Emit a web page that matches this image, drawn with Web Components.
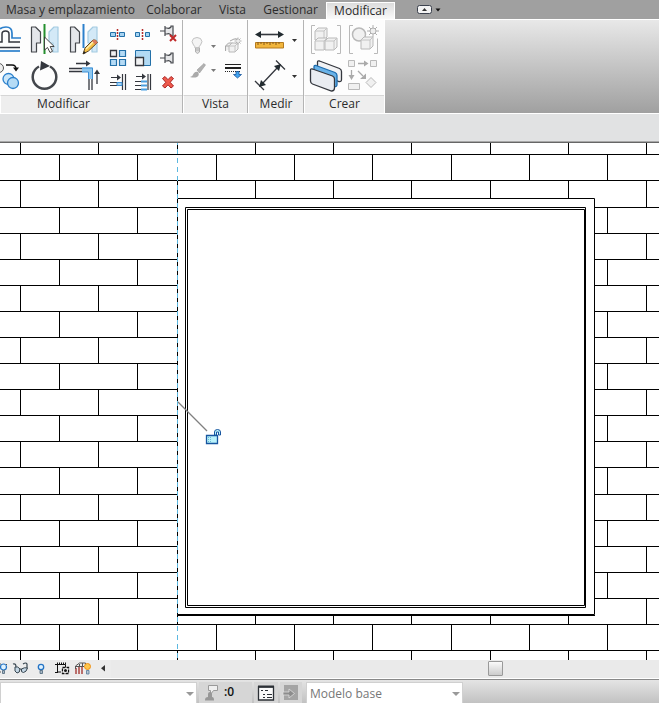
<!DOCTYPE html>
<html lang="es">
<head>
<meta charset="utf-8">
<title>Modificar</title>
<style>
html,body{height:100%;margin:0}
body{font:12px/16px "Open Sans","Noto Sans",sans-serif;color:#2b2b2b;overflow:hidden}
</style>
</head>
<body>
<cad-app></cad-app>
<script>
const DOOR = (x, flip, fill, stroke) => {
  const s = flip ? -1 : 1, p = (dx, y) => (x + s * dx) + ' ' + y;
  return `<path d="M${p(0,27)}L${p(4,27)} ${p(9,32)} ${p(9,43)} ${p(5,43)} ${p(5,52)} ${p(0,52)}Z" fill="${fill}" stroke="${stroke}" stroke-width="1.2" stroke-linejoin="round"/>`;
};
const PIN = y => `<path d="M160 ${y}h5M165 ${y-5}v10M165 ${y-3}h2q2 1 4 -1v-1h2v10h-2v-1q-2-2-4-1h-2" fill="#e6e7e9" stroke="#44474c" stroke-width="1.2"/>`;
const DROP = (x, y) => `<path d="M${x-2.5} ${y-1.5}h5l-2.5 3z" fill="#333"/>`;
const CUBE = (x, y, s) => `<path d="M${x} ${y+3}l3-3h${s}v${s}l-3 3h-${s}z" fill="#f1f1f1" stroke="#b9b9b9"/><path d="M${x} ${y+3}h${s}v${s}M${x+s} ${y+3}l3-3" fill="none" stroke="#c4c4c4"/>`;
const ICONS = {
  offset: ['0 20 24 37', `<path d="M0 42H2V34q0-3 3.500-3T9 34V42H20" fill="none" stroke="#34373e" stroke-width="1.500"/><path d="M0 29q2-2 6-2 6 0 6 6v5H21" fill="none" stroke="#2c80cc" stroke-width="1.700"/><path d="M0 47.500H20" stroke="#34373e" stroke-width="1.500"/><path d="M0 51H20" stroke="#2c80cc" stroke-width="1.700"/>`],
  mirrorPick: ['24 20 41 37', DOOR(31.5,0,'#e4e6ea','#44474c') + DOOR(58,1,'#d3e9f7','#a3cbe2') + `<path d="M44.500 24V54" stroke="#25902f" stroke-width="2"/><path d="M44.500 37v13l3-2.500 2.500 5 2.500-1.200-2.300-4.800h4z" fill="#fff" stroke="#333" stroke-width=".9"/>`],
  mirrorDraw: ['65 20 40 37', DOOR(70.5,0,'#e4e6ea','#44474c') + DOOR(97,1,'#d3e9f7','#a3cbe2') + `<path d="M83.500 24V48" stroke="#2c80cc" stroke-width="2"/><path d="M83 54l2-6 8-8q3-1 4.500 2.500l-9 8.500z" fill="#f6c145" stroke="#5a4424"/><path d="M83 54l1-3 2 2z" fill="#222"/><path d="M93 40q3-1 4.500 2.500l-2 2-4-3z" fill="#da7c5c"/><path d="M86 49l7-7" stroke="#fff2b5" stroke-width="1.500"/>`],
  copy: ['0 57 24 37', `<circle cx="-1" cy="68" r="4.500" fill="#eee" stroke="#555"/><path d="M6 65H12q4 0 4 4" fill="none" stroke="#111" stroke-width="1.400"/><path d="M13 67.500h6l-3 4z" fill="#111"/><circle cx="8.500" cy="79" r="5.500" fill="#cbe7fa" stroke="#2c80cc" stroke-width="1.300"/><circle cx="13" cy="83" r="5.500" fill="#b5dbf5" stroke="#2c80cc" stroke-width="1.300"/>`],
  rotate: ['24 57 41 37', `<path d="M50 66.500A11.800 11.800 0 1 1 39 66.500" fill="none" stroke="#44474c" stroke-width="2.500"/><path d="M41 61l9 5-10 4.500z" fill="#34373e"/>`],
  trim: ['65 57 40 37', `<path d="M76 63.500H87M97 84V72M69 68.500H82M69 71.500H82M89 79V90M92 79V90" stroke="#34373e" stroke-width="1.300"/><path d="M86 60.500l4.500 3-4.500 3zM94 74l3-4.500 3 4.500z" fill="#34373e"/><path d="M82 67.500H93V79H88V72H82z" fill="#8ec7ef"/><path d="M82 68H92.500V79M82 72H88.500V79" fill="none" stroke="#3d8fd4"/>`],
  split: ['105 22 25 24', `<path d="M110.500 32.500h5v4h-5zM119.500 32.500h5v4h-5z" fill="#a6d3f2" stroke="#2370a8"/><path d="M117.500 29V40" stroke="#b32c2c" stroke-width="1.500" stroke-dasharray="2 1"/>`],
  splitGap: ['130 22 25 24', `<path d="M135.500 32.500h4v4h-4zM145.500 32.500h4v4h-4z" fill="#a6d3f2" stroke="#2370a8"/><path d="M142.500 29V40" stroke="#b32c2c" stroke-width="1.500" stroke-dasharray="2 1"/>`],
  unpin: ['155 22 27 24', PIN(31) + `<path d="M170 35l6 6M176 35l-6 6" stroke="#c02a2a" stroke-width="2"/>`],
  array: ['105 46 25 24', `<path d="M110.500 50.500h6v6h-6z" fill="#f0f1f2" stroke="#34373e" stroke-width="1.300"/><path d="M119.500 50.500h6v6h-6zM110.500 59.500h6v6h-6zM119.500 59.500h6v6h-6z" fill="#b5dbf5" stroke="#2370a8" stroke-width="1.200"/>`],
  scale: ['130 46 25 24', `<path d="M135.500 50.500h15v15h-15z" fill="#b2daf4" stroke="#2370a8"/><path d="M135.500 57.500h8v8h-8z" fill="#f0f1f2" stroke="#34373e" stroke-width="1.300"/>`],
  pin: ['155 46 27 24', PIN(58)],
  align: ['105 70 25 24', `<path d="M111 77.500H118M110 82.500H118M110 85.500H118M122.500 74V90M125.500 74V90" stroke="#34373e" stroke-width="1.200"/><path d="M117 74.500l4 3-4 3z" fill="#34373e"/><path d="M117 82.500h5v3h-5z" fill="#a6d3f2" stroke="#3d8fd4"/>`],
  alignMany: ['130 70 25 24', `<path d="M136 76.500H143M135 81.500H141M135 85.500H141M135 89.500H141M148 74V90M150.500 74V90" stroke="#34373e" stroke-width="1.200"/><path d="M142 73.500l4 3-4 3z" fill="#34373e"/><path d="M141 81.500h6M141 85.500h6M141 89.500h6" stroke="#4a9fdf" stroke-width="2"/>`],
  remove: ['155 70 27 24', `<path d="M162.500 78.500l2.500-2 3 3.200 3-3.200 2.500 2-3.300 3.800 3.300 3.700-2.500 2-3-3.200-3 3.200-2.500-2 3.300-3.700z" fill="#ee5a4c" stroke="#ac2525"/>`],
  bulb: ['186 34 21 24', `<path d="M195 48q0-2-1.500-3-3-3.500 0-6.500 3.500-2 7 0 3 3 0 6.500-1.500 1-1.500 3z" fill="#f4f4f4" stroke="#c2c2c2"/><path d="M195.500 48h4v4l-2 1.500-2-1.500zM195.500 50h4" fill="#ddd" stroke="#b0b0b0"/>`],
  drop1: ['207 34 13 24', `<g opacity=".65">${DROP(213.5,46.5)}</g>`],
  displace: ['220 34 27 24', `<path d="M225.500 51v-5l3-3h4v5M226 46h4M230 41l4-2h4" fill="#eee" stroke="#a8a8a8"/>${CUBE(229,43,6)}<path d="M238 37.500v7M234.500 41h7M235.500 38.500l5 5M240.500 38.500l-5 5" stroke="#b0b0b0"/><circle cx="238" cy="41" r="1.500" fill="#eee"/>`],
  brush: ['186 58 21 24', `<path d="M197 70l7-6.500 1.500 1.500-6 8z" fill="#b2b2b2" stroke="#999" stroke-width=".6"/><path d="M190 77q3-1 4-4 2-2 4-1 2 3-1 5-3 1-7 0z" fill="#aaa"/>`],
  drop2: ['207 58 13 24', `<g opacity=".65">${DROP(213.5,70.5)}</g>`],
  weights: ['220 58 27 24', `<path d="M225 64.500H241" stroke="#222"/><path d="M225 68H241" stroke="#222" stroke-width="2"/><path d="M225 71.500H241" stroke="#222" stroke-dasharray="1 1"/><path d="M236 71.500h3v3h2.500l-4 3.500-4-3.500h2.500z" fill="#43a4ef" stroke="#14539c" stroke-width=".8"/>`],
  ruler: ['249 20 38 37', `<path d="M258 34.500H281" stroke="#34373e" stroke-width="1.600"/><path d="M255 34.500l6-3.500v7zM284 34.500l-6-3.500v7z" fill="#222b30"/><path d="M255.500 42.500h28v5.500h-28z" fill="#f1b53c" stroke="#b57b20"/><path d="M258 42v3M261 42v2M264 42v3M267 42v2M270 42v3M273 42v2M276 42v3M279 42v2" stroke="#85591a"/>`],
  drop3: ['287 20 15 37', DROP(294.5,40.5)],
  dimension: ['249 57 38 37', `<path d="M262 84L278 67M255 81l9 9M276 60.500l9 9" stroke="#34373e" stroke-width="1.300"/><path d="M259 87l2-7 5 5zM281 64l-7 2 5 5z" fill="#222b30"/>`],
  drop4: ['287 57 15 37', DROP(294.5,76.5)],
  group: ['307 20 38 37', `<path d="M315 25.500h-3.500v28h3.500M337 25.500h3.500v28h-3.500" fill="none" stroke="#b9b9b9"/>${CUBE(315,28,9)}${CUBE(315,38,9)}${CUBE(325,38,9)}`],
  similar: ['345 20 38 37', `<path d="M353 25.500h-3.500v28h3.500M374 53.500h3.500v-15" fill="none" stroke="#b9b9b9"/><circle cx="359" cy="34.500" r="6.500" fill="#f1f1f1" stroke="#b9b9b9" stroke-width="1.500"/>${CUBE(361,37,9)}<circle cx="373" cy="31" r="3" fill="#eee" stroke="#b0b0b0"/><path d="M373 25v3M373 34v3M367 31h3M376 31h3M369 27l2 2M377 27l-2 2M369 35l2-2M377 35l-2-2" stroke="#b0b0b0"/>`],
  parts: ['307 57 38 37', `<path d="M317.500 62q0-1.500 2-1l20 7.500q2 1 2 3v8q0 2.500-2.500 2l-21.500-8z" fill="#f1f2f4" stroke="#34373e" stroke-width="1.300"/><path d="M314 67q0-2 2-1.500l19 7q2 1 2 3v9q0 2.500-2.500 2l-20.500-8z" fill="#68b2e8" stroke="#1d6cae" stroke-width="1.300"/><path d="M310.500 70q0-1.500 2-1l20 7q2 1 2 3v9q0 3-3 3l-19-7q-2-1-2-3z" fill="#e9ecf1" stroke="#34373e" stroke-width="1.300"/>`],
  assembly: ['345 57 38 37', `<path d="M348.500 60.500h6v6h-6zM370.500 60.500h6v6h-6zM348.500 83.500h11v6h-11zM371 77.500l5 5-5 5-5-5z" fill="#f0f0f0" stroke="#b9b9b9"/><path d="M358 63.500h6M351.500 70v6M358 71l5 5" stroke="#aaa" stroke-width="1.300"/><path d="M364 60.500l4.500 3-4.500 3zM348.500 75h6l-3 5zM366 73.500v5.500h-6z" fill="#aaa"/>`],
  sunPath: ['0 660 11 17', `<circle cx="3.500" cy="667" r="3" fill="#dff2ff" stroke="#2574c5" stroke-width="1.200"/><path d="M2.500 670.500h2v3h-2z" fill="#a8b7c4" stroke="#4b6478" stroke-width=".8"/><path d="M0 663v2M0 671v2M7 664l-1 1" stroke="#555"/>`],
  glasses: ['11 660 19 17', `<path d="M13 664q3-1 3 3M23 664q3-2 4 0v4" fill="none" stroke="#37454f" stroke-width="1.200"/><path d="M15 667q3-1 5 2 0 4-3 4-3-1-2-6zM21.500 669q3-2 6-1-1 4-4 4.500-3 0-2-3.500zM19.500 669h2" fill="#c4d6e4" stroke="#37454f"/>`],
  bulbBlue: ['30 660 22 17', `<circle cx="41" cy="667" r="2.700" fill="#dff2ff" stroke="#2574c5" stroke-width="1.300"/><path d="M40 670.500h2.500v3h-2.500z" fill="#a8b7c4" stroke="#4b6478" stroke-width=".8"/>`],
  crop: ['52 660 21 17', `<path d="M57.500 664.500h8v3M57.500 664v8H61M55 664.500h2M55 672.500h3" fill="none" stroke="#111"/><path d="M57 663.500h10" stroke="#111" stroke-width="2" stroke-dasharray="1 1"/><path d="M62.500 667.500h6v6h-6z" fill="#fff" stroke="#111" stroke-width="1.300" stroke-dasharray="3 1"/><circle cx="65.500" cy="670.500" r="1.500" fill="#111"/>`],
  analytic: ['73 660 20 17', `<path d="M76 668v6M79 667v7M82 667v7" stroke="#a63a36" stroke-width="1.400"/><path d="M75.500 669v-3l4-3h6v4M76 666.500h8M79.500 664v3M82.500 663v4" fill="none" stroke="#555"/><circle cx="87.500" cy="666.500" r="3" fill="#ffc64a" stroke="#ee9117"/><path d="M86.500 670.500h2.500v3.500h-2.500z" fill="#b9c7d2" stroke="#537797" stroke-width=".8"/>`],
  scrollLeft: ['93 660 18 17', `<path d="M105 665v6.500l-4-3.200z" fill="#333"/>`],
  requests: ['200 681 22 22', `<path d="M209.500 684.500h9v5h-4l-3 4v-4h-2z" fill="#efefef" stroke="#999"/><path d="M206 699q0-3 3-3v-3q0-2 2-2t2 2v3q2 0 2 3v.500h-9z" fill="#979797"/>`],
  options: ['254 681 24 22', `<path d="M258.500 686v13h15v-13z" fill="#fafafa" stroke="#2c3036" stroke-width="1.300"/><path d="M258 685.500h16" stroke="#2c3036" stroke-width="2"/><path d="M261 689.500h2M263 693.500h2M263 696.500h2M265 689.500h3M267 693.500h5M267 696.500h5" stroke="#2c3036" stroke-width="1.200"/>`],
  exclude: ['281 681 22 22', `<path d="M285 684h14v15h-14z" fill="#a4a4a4"/><path d="M284 691h6v-3l5.500 4.500-5.500 4.500v-3h-6z" fill="#8c8c8c" stroke="#ddd" stroke-width=".8"/>`],
  collapse: ['415 3 28 14', `<rect x="417.500" y="5.500" width="14" height="8" rx="2" fill="#f3f3f3" stroke="#3c424e"/><path d="M422 11h5l-2.500-3z" fill="#333"/><path d="M435.500 8.500h5l-2.500 3z" fill="#111"/>`]
};
function define(name, css, html) {
  customElements.define(name, class extends HTMLElement {
    connectedCallback() {
      if (this.shadowRoot) return;
      this.attachShadow({mode: 'open'}).innerHTML = `<style>*{box-sizing:border-box}button,select{font:inherit;color:inherit;border:0;background:none;margin:0;padding:0}${css}</style>` + (typeof html === 'function' ? html(this) : html);
    }
  });
}

define('tool-button', `:host{display:block;flex:none}button{display:block}svg{display:block}`, el => {
  const [box, art] = ICONS[el.getAttribute('icon')], [, , w, h] = box.split(' ');
  return `<button type="button" aria-label="${el.getAttribute('label')}"><svg width="${w}" height="${h}" viewBox="${box}" aria-hidden="true">${art}</svg></button>`;
});

define('ribbon-tabs', `:host{display:flex;height:19px;background:#a0a0a0}
nav{display:grid;grid-template-columns:138px 72px 45px 71px 69px}
button{white-space:nowrap;line-height:18px;text-align:center}
button:first-child{text-align:left;padding-left:6px}
button.on{margin-top:2px;background:linear-gradient(#dcdcdc,#fafafa);border:1px solid #fff;border-bottom:0;line-height:14px}
tool-button{margin:3px 0 0 20px}`,
`<nav><button>Masa y emplazamiento</button><button>Colaborar</button><button>Vista</button><button>Gestionar</button><button class="on" aria-current="true">Modificar</button></nav><tool-button icon="collapse" label="Minimizar cinta"></tool-button>`);

define('ribbon-panel', `:host{display:flex;flex-direction:column;background:#fdfdfd;border-right:1px solid #b4b4b4}
.body{display:flex;height:75px}
footer{height:18px;background:#eee;border-top:1px solid #d6d6d6;border-left:1px solid #fff;text-align:center;line-height:16px;padding-right:var(--cut,0)}`,
el => `<div class="body"><slot></slot></div><footer>${el.getAttribute('label')}</footer>`);

const tools = list => list.map(n => `<tool-button icon="${n}" label="${n}"></tool-button>`).join('');
define('ribbon-bar', `:host{display:flex;height:95px;border-top:1px solid #fff;border-bottom:1px solid #fff;background:linear-gradient(#e8e8e8,#a0a0a0)}
.g{display:grid;align-content:start}
.big{grid-template-columns:24px 41px 40px}
.small{grid-template-columns:25px 25px 27px;padding-top:2px}
.view{grid-template-columns:21px 13px 27px;padding:14px 0 0 3px}
.measure{grid-template-columns:38px 15px;padding:0 1px}
.make{grid-template-columns:38px 38px;padding:0 1px 0 3px}
.wide{--cut:56px}
.last{border-right-color:#fff}`,
`<ribbon-panel class="wide" label="Modificar"><div class="g big">${tools(['offset','mirrorPick','mirrorDraw','copy','rotate','trim'])}</div><div class="g small">${tools(['split','splitGap','unpin','array','scale','pin','align','alignMany','remove'])}</div></ribbon-panel>
<ribbon-panel label="Vista"><div class="g view">${tools(['bulb','drop1','displace','brush','drop2','weights'])}</div></ribbon-panel>
<ribbon-panel label="Medir"><div class="g measure">${tools(['ruler','drop3','dimension','drop4'])}</div></ribbon-panel>
<ribbon-panel class="last" label="Crear"><div class="g make">${tools(['group','similar','parts','assembly'])}</div></ribbon-panel>`);

define('options-bar', `:host{display:block;height:29px;box-sizing:border-box;background:#e1e2e3;border-bottom:1px solid #666;box-shadow:inset 0 -1px #a8a8a8}`, '');

define('wall-view', `:host{display:block;flex:1;min-height:0;background:#fff;overflow:hidden}svg{display:block;width:100%;height:100%}`, () => {
  const pitch = 78.26, course = 26.09;
  let d = '';
  for (let r = 0; r < 60; r++) {
    const y = Math.round(154.36 + r * course), up = r ? Math.round(154.36 + (r - 1) * course) : 143;
    d += `M0 ${y}.5H4000`;
    for (let c = 0; c < 50; c++) d += `M${Math.floor((r % 2 ? 20.5 : 20.5) + (r % 2 ? 39.2 : 0) + c * pitch)}.5 ${up}V${y}`;
  }
  return `<svg role="img" aria-label="Alzado de muro con ventana"><g transform="translate(0 -143)" fill="none" stroke="#000">
<path d="${d}" shape-rendering="crispEdges"/>
<path d="M177.500 198.500H594.500V614.500H177.500Z" fill="#fff"/><path d="M177 615.500H595"/>
<path d="M185.500 207.500H585.500V607.500H185.500ZM187.500 209.500H584.500V605.500H187.500Z"/>
<path d="M177.500 140V1500" stroke="#5cb8e0" stroke-dasharray="5 4"/>
<path d="M178 402L207 431" stroke="#808080" stroke-width="1.300"/>
<path d="M206.500 435.500h11v8h-11z" fill="#baf3fb" stroke="#1756a0" stroke-width="1.300"/>
<path d="M208 437.500h3M208 439.500h3M208 441.500h3" stroke="#6bbad2" stroke-dasharray="1 1"/>
<path d="M214.500 435v-3q0-2.500 3-2.500t3 2.500v3h-2v-3h-2v3z" fill="#baf3fb" stroke="#1756a0"/></g></svg>`;
});

define('view-bar', `:host{display:flex;height:19px;box-sizing:border-box;background:#ececec;border-bottom:1px solid #fff}
.track{flex:1;background:#eaeaea;display:flex;padding-left:377px}
.thumb{width:15px;height:15px;margin-top:1px;background:linear-gradient(#fafafa,#ccc);border:1px solid #999;border-radius:1px}`,
tools(['sunPath','glasses','bulbBlue','crop','analytic','scrollLeft']) + `<div class="track" role="scrollbar" aria-label="Desplazamiento horizontal" aria-controls="view" aria-valuenow="50"><div class="thumb"></div></div>`);

define('drop-list', `:host{display:block;box-sizing:border-box;position:relative;background:#fff;border:1px solid #d0d0d0;border-bottom:0;color:#777}
select{appearance:none;width:100%;height:21px;padding:0 24px 0 3px;display:block}
i{position:absolute;right:2px;top:9px;border:4px solid transparent;border-top-color:#999;pointer-events:none}`,
el => `<select aria-label="${el.getAttribute('label')}"><option>${el.getAttribute('value')}</option></select><i></i>`);

define('status-bar', `:host{display:flex;gap:2px;height:24px;box-sizing:border-box;border-top:1px solid #888;padding-top:2px;background:linear-gradient(#e4e4e4,#c2c2c2)}
.work{width:197px}.model{width:157px;margin-left:2px}
.cell{display:flex;background:#d6d6d6;height:21px;color:#111}
.req{width:53px;line-height:20px}.req span{margin-left:3px;font-weight:600}
drop-list{flex:none}`,
`<drop-list class="work" label="Subproyecto" value=""></drop-list>
<div class="cell req"><tool-button icon="requests" label="Solicitudes"></tool-button><span>:0</span></div>
<div class="cell"><tool-button icon="options" label="Opciones de diseño"></tool-button></div>
<div class="cell"><tool-button icon="exclude" label="Excluir opciones"></tool-button></div>
<drop-list class="model" label="Opción de diseño" value="Modelo base"></drop-list>`);

define('cad-app', `:host{display:flex;flex-direction:column;height:100vh}`,
`<ribbon-tabs></ribbon-tabs><ribbon-bar></ribbon-bar><options-bar></options-bar><wall-view id="view"></wall-view><view-bar></view-bar><status-bar></status-bar>`);
</script>
</body>
</html>
